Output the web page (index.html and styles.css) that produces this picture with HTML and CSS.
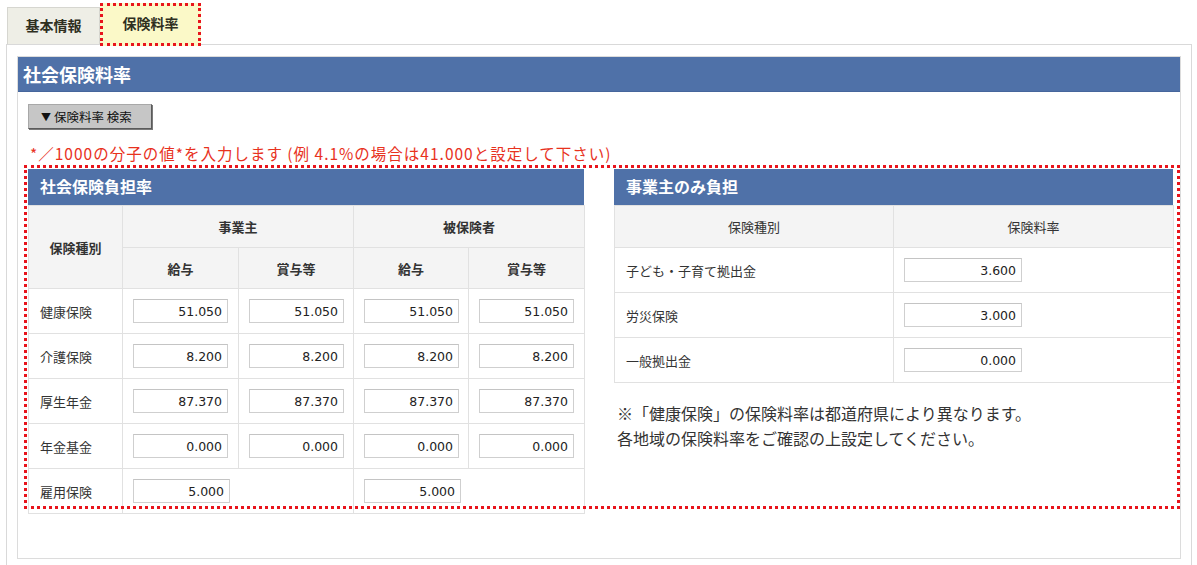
FILE: index.html
```html
<!DOCTYPE html>
<html lang="ja">
<head>
<meta charset="utf-8">
<title>社会保険料率</title>
<link rel="stylesheet" href="styles.css">
</head>
<body>
<div class="page">
  <div class="tabs">
    <div class="tab">基本情報</div>
    <div class="tab tab-active">保険料率</div>
  </div>
  <div class="panel">
    <div class="box">
      <div class="box-title">社会保険料率</div>
      <div class="box-body">
        <button class="search-btn" type="button"><span class="tri">▼</span>保険料率 検索</button>
        <p class="note-red">*／1000の分子の値*を入力します (例 4.1%の場合は41.000と設定して下さい)</p>
        <div class="tables">
          <section class="card card-left">
            <div class="card-title">社会保険負担率</div>
            <table class="grid grid-left">
              <colgroup>
                <col class="c-label"><col class="c1"><col class="c2"><col class="c3"><col class="c4">
              </colgroup>
              <thead>
                <tr class="h1">
                  <th rowspan="2">保険種別</th>
                  <th colspan="2">事業主</th>
                  <th colspan="2">被保険者</th>
                </tr>
                <tr class="h2">
                  <th>給与</th><th>賞与等</th><th>給与</th><th>賞与等</th>
                </tr>
              </thead>
              <tbody>
                <tr>
                  <td class="label">健康保険</td>
                  <td><input class="num" value="51.050"></td>
                  <td><input class="num" value="51.050"></td>
                  <td><input class="num" value="51.050"></td>
                  <td><input class="num" value="51.050"></td>
                </tr>
                <tr>
                  <td class="label">介護保険</td>
                  <td><input class="num" value="8.200"></td>
                  <td><input class="num" value="8.200"></td>
                  <td><input class="num" value="8.200"></td>
                  <td><input class="num" value="8.200"></td>
                </tr>
                <tr>
                  <td class="label">厚生年金</td>
                  <td><input class="num" value="87.370"></td>
                  <td><input class="num" value="87.370"></td>
                  <td><input class="num" value="87.370"></td>
                  <td><input class="num" value="87.370"></td>
                </tr>
                <tr>
                  <td class="label">年金基金</td>
                  <td><input class="num" value="0.000"></td>
                  <td><input class="num" value="0.000"></td>
                  <td><input class="num" value="0.000"></td>
                  <td><input class="num" value="0.000"></td>
                </tr>
                <tr>
                  <td class="label">雇用保険</td>
                  <td colspan="2"><input class="num num-wide" value="5.000"></td>
                  <td colspan="2"><input class="num num-wide" value="5.000"></td>
                </tr>
              </tbody>
            </table>
          </section>
          <section class="card card-right">
            <div class="card-title">事業主のみ負担</div>
            <table class="grid grid-right">
              <colgroup><col class="r1"><col class="r2"></colgroup>
              <thead>
                <tr class="h1"><th>保険種別</th><th>保険料率</th></tr>
              </thead>
              <tbody>
                <tr><td class="label">子ども・子育て拠出金</td><td><input class="num num-r" value="3.600"></td></tr>
                <tr><td class="label">労災保険</td><td><input class="num num-r" value="3.000"></td></tr>
                <tr><td class="label">一般拠出金</td><td><input class="num num-r" value="0.000"></td></tr>
              </tbody>
            </table>
            <p class="note">※「健康保険」の保険料率は都道府県により異なります。<br>各地域の保険料率をご確認の上設定してください。</p>
          </section>
        </div>
        <div class="annotation"></div>
      </div>
    </div>
  </div>
</div>
</body>
</html>
```

FILE: styles.css
```css
* { box-sizing: border-box; }

html, body {
  margin: 0;
  padding: 0;
  background: #ffffff;
}

body {
  font-family: "Noto Sans CJK JP", "Noto Sans", sans-serif;
  color: #333333;
  overflow: hidden;
}

.page {
  padding-left: 6px;
  width: 1192px;
}

.tabs {
  display: flex;
  align-items: flex-start;
  height: 44px;
  padding-left: 1px;
}

.tab {
  margin-top: 7px;
  width: 93px;
  height: 37px;
  background: #eeeee6;
  border: 1px solid #d6d6d0;
  border-bottom: none;
  font-size: 14px;
  font-weight: bold;
  color: #2f2f1f;
  display: flex;
  align-items: center;
  justify-content: center;
  padding-bottom: 3px;
}

.tab-active {
  position: relative;
  z-index: 2;
  margin-top: 3px;
  width: 101px;
  height: 43px;
  background: #fbf9c8;
  border: 3px dotted #e8141c;
  padding-bottom: 3px;
}

.panel {
  border: 1px solid #d9d9d9;
  border-bottom: none;
  height: 530px;
  padding: 11px 10px 0 10px;
}

.box {
  border: 1px solid #dcdcdc;
  height: 503px;
}

.box-title {
  height: 35px;
  background: #4f71a8;
  border-bottom: 1px solid #46669c;
  color: #ffffff;
  font-size: 18px;
  font-weight: bold;
  line-height: 34px;
  padding-left: 5px;
}

.box-body {
  position: relative;
  padding: 12px 10px 0 10px;
}

.search-btn {
  display: flex;
  align-items: center;
  width: 124px;
  height: 25px;
  padding: 0 0 0 12px;
  background: #c6c6c6;
  border: 1px solid #a8a8a8;
  border-right-color: #5a5a5a;
  border-bottom-color: #5a5a5a;
  box-shadow: 1px 1px 0 #7a7a7a;
  font-family: "Noto Sans CJK JP", sans-serif;
  font-size: 12.5px;
  color: #111111;
  cursor: pointer;
}

.tri {
  font-size: 10px;
  margin-right: 3px;
}

.note-red {
  margin: 14px 0 0 2px;
  font-size: 15.5px;
  letter-spacing: 1px;
  line-height: 20px;
  color: #e8321e;
  white-space: nowrap;
}

.tables {
  display: flex;
  gap: 30px;
  margin-top: 6px;
}

.card-left { width: 556px; }
.card-right { width: 559px; }

.card-title {
  height: 36px;
  background: #4f71a8;
  color: #ffffff;
  font-size: 16px;
  font-weight: bold;
  line-height: 35px;
  padding-left: 12px;
}

.grid {
  border-collapse: collapse;
  table-layout: fixed;
  width: 100%;
}

.grid th,
.grid td {
  border: 1px solid #e1e1e1;
  padding: 0;
  font-size: 13px;
  color: #333333;
}

.grid th {
  background: #f4f4f4;
  font-weight: bold;
  text-align: center;
}

.grid-right th {
  font-weight: normal;
}

.grid td {
  background: #ffffff;
  padding-left: 10px;
  vertical-align: middle;
}

.grid td.label {
  padding-left: 11px;
}

.c-label { width: 94px; }
.c1 { width: 116px; }
.c2 { width: 115px; }
.c3 { width: 115px; }
.c4 { width: 116px; }

.r1 { width: 279px; }
.r2 { width: 280px; }

.grid-left .h1 { height: 42px; }
.grid-left .h2 { height: 41px; }
.grid-left tbody tr { height: 45px; }

.grid-right .h1 { height: 42px; }
.grid-right tbody tr { height: 45px; }

.num {
  display: block;
  width: 95px;
  height: 24px;
  border: 1px solid #cfcfcf;
  border-top-color: #c4c4c4;
  background: #ffffff;
  font-family: "DejaVu Sans", Verdana, sans-serif;
  font-size: 12.5px;
  color: #222222;
  text-align: right;
  padding: 0 5px 0 0;
  outline: none;
}

.num-wide { width: 97px; }
.num-r { width: 118px; }

.note {
  margin: 18px 0 0 3px;
  font-size: 16px;
  line-height: 25px;
  color: #333333;
}

.annotation {
  position: absolute;
  left: 6px;
  top: 73px;
  width: 1156px;
  height: 344px;
  border: 3px dotted #e8141c;
  pointer-events: none;
}
```
